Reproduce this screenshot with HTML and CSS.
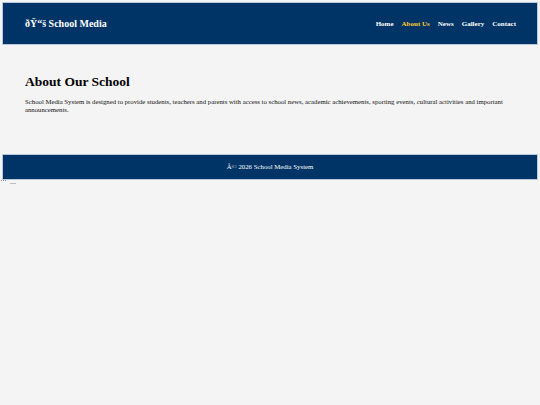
FILE: index.html
```html
<!DOCTYPE html>
<html>
<head>
<meta charset="utf-8">
<title>School Media System</title>
<link rel="stylesheet" href="styles.css">
</head>
<body>
<header class="site-header">
  <div class="logo">ðŸ“š School Media</div>
  <nav class="nav">
    <a href="#">Home</a>
    <a href="#" class="active">About Us</a>
    <a href="#">News</a>
    <a href="#">Gallery</a>
    <a href="#">Contact</a>
  </nav>
</header>
<main class="content">
  <h1>About Our School</h1>
  <p>School Media System is designed to provide students, teachers and parents with access to school news, academic achievements, sporting events, cultural activities and important announcements.</p>
</main>
<footer class="site-footer">Â© 2026 School Media System</footer>
<div class="trail"><span class="dots"><i></i><i></i><i></i></span><span class="dash">---</span></div>
</body>
</html>
```
FILE: styles.css
```css
html, body {
  margin: 0;
  padding: 0;
  background: #f4f4f4;
  font-family: "Liberation Serif", "Times New Roman", serif;
  color: #111;
}
body {
  padding: 3px 3px 0 3px;
}
.site-header {
  background: #003366;
  height: 41px;
  display: flex;
  align-items: center;
  justify-content: space-between;
  padding: 0 21px 0 22px;
  box-shadow: 0 0 0 1px #b8c8dc;
}
.logo {
  color: #fff;
  font-weight: bold;
  font-size: 10px;
}
.nav {
  display: flex;
  gap: 8px;
}
.nav a {
  color: #fff;
  text-decoration: none;
  font-weight: bold;
  font-size: 7px;
}
.nav a.active {
  color: #ffcc33;
}
.content {
  padding: 30px 22px 42px 22px;
}
.content h1 {
  margin: 0 0 8px 0;
  font-size: 13.5px;
  font-weight: bold;
  color: #000;
}
.content p {
  margin: 0;
  font-size: 6.75px;
  line-height: 7.5px;
}
.site-footer {
  background: #003366;
  color: #fff;
  text-align: center;
  font-size: 6.8px;
  height: 24px;
  line-height: 24px;
  box-shadow: 0 0 0 1px #b8c8dc;
}
.trail {
  display: flex;
  align-items: flex-start;
  gap: 2px;
  height: 8px;
  padding-top: 1px;
  margin-left: -2px;
}
.trail .dots {
  display: flex;
  gap: 1px;
}
.trail .dots i {
  width: 1px;
  height: 1px;
  background: #8a8f96;
}
.trail .dash {
  font-size: 6px;
  line-height: 6px;
  color: #666;
  margin-left: 2px;
  margin-top: 0;
}
```
